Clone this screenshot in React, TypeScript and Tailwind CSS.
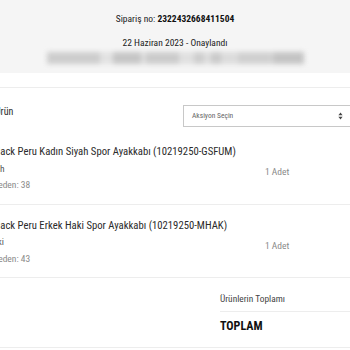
import React from "react";

function SortIcon() {
  return (
    <svg width="5" height="8" viewBox="0 0 5 8" className="block">
      <path d="M2.5 0.5 L4.6 3.2 L0.4 3.2 Z" fill="#444" />
      <path d="M2.5 7.5 L4.6 4.8 L0.4 4.8 Z" fill="#444" />
    </svg>
  );
}

const blurBlocks = [
  { w: "w-[53px]", c: "bg-[#cdcdcd]" },
  { w: "w-[13px]", c: "bg-[#e2e2e2]" },
  { w: "w-[28px]", c: "bg-[#c6c6c6]" },
  { w: "w-[5px]", c: "bg-[#dedede]" },
  { w: "w-[33px]", c: "bg-[#cbcbcb]" },
  { w: "w-[15px]", c: "bg-[#e0e0e0]" },
  { w: "w-[10px]", c: "bg-[#cecece]" },
  { w: "w-[7px]", c: "bg-[#dedede]" },
  { w: "w-[10px]", c: "bg-[#cacaca]" },
  { w: "w-[17px]", c: "bg-[#dcdcdc]" },
  { w: "w-[33px]", c: "bg-[#d0d0d0]" },
  { w: "w-[2px]", c: "bg-[#d9d9d9]" },
  { w: "w-[31px]", c: "bg-[#c4c4c4]" },
];

function Product({
  title,
  color,
  colorOffset,
  size,
}: {
  title: string;
  color: string;
  colorOffset: string;
  size: string;
}) {
  return (
    <div className="grid grid-cols-[265px_85px] items-start border-b border-[#ededed] pt-[13px] pb-[10px]">
      <div className="min-w-0 overflow-visible">
        <div className="-translate-x-[7px] leading-[16.5px] whitespace-nowrap">
          <div className="-translate-x-[1px] text-[10.7px] text-[#2b2b2b]">{title}</div>
          <div className={`text-[9.5px] text-[#555] ${colorOffset}`}>{color}</div>
          <div className="text-[9.5px] text-[#8a8a8a]">{size}</div>
        </div>
      </div>
      <div className="pt-[20px] text-[9.5px] leading-[16px] text-[#8a8a8a] whitespace-nowrap">1 Adet</div>
    </div>
  );
}

export default function App() {
  return (
    <div className="w-[350px] h-[350px] overflow-hidden bg-white font-['Roboto_Condensed',sans-serif] text-[#2b2b2b]">
      <div className="h-[73px] bg-[#f5f5f5] flex flex-col items-center">
        <div className="mt-[13px] text-[9.5px] leading-[12px] text-[#222]">
          Sipariş no: <span className="font-bold text-[#111]">2322432668411504</span>
        </div>
        <div className="mt-[12px] text-[9.5px] leading-[12px] text-[#222]">22 Haziran 2023 - Onaylandı</div>
        <div className="mt-[3px] flex h-[12px] w-[257px] blur-[2.5px]">
          {blurBlocks.map((b, i) => (
            <div key={i} className={`h-full ${b.w} ${b.c}`} />
          ))}
        </div>
      </div>

      <div className="mt-[14px] border-t border-[#ededed]" />

      <div className="grid grid-cols-[183px_167px] items-start pt-[17px]">
        <div className="-translate-x-[5px] pt-[0.5px] text-[10px] leading-[12px] text-[#2b2b2b]">Ürün</div>
        <div className="flex h-[22px] w-[175px] items-center justify-between border border-[#c8c8c8] pl-[8px] pr-[14px] text-[7.5px] text-[#666]">
          <span>Aksiyon Seçin</span>
          <SortIcon />
        </div>
      </div>

      <div className="h-[4px]" />

      <Product
        title="Black Peru Kadın Siyah Spor Ayakkabı (10219250-GSFUM)"
        color="Siyah"
        colorOffset="-translate-x-[8.5px]"
        size="Beden: 38"
      />
      <Product
        title="Black Peru Erkek Haki Spor Ayakkabı (10219250-MHAK)"
        color="Haki"
        colorOffset="-translate-x-[6px]"
        size="Beden: 43"
      />

      <div className="border-b border-[#ededed] pt-[15px] pb-[14px]">
        <div className="ml-[220px]">
          <div className="border-b border-[#ededed] pb-[6px] text-[9.4px] leading-[12px] text-[#444]">Ürünlerin Toplamı</div>
          <div className="mt-[7px] text-[12px] leading-[14px] font-bold text-[#111]">TOPLAM</div>
        </div>
      </div>
    </div>
  );
}
